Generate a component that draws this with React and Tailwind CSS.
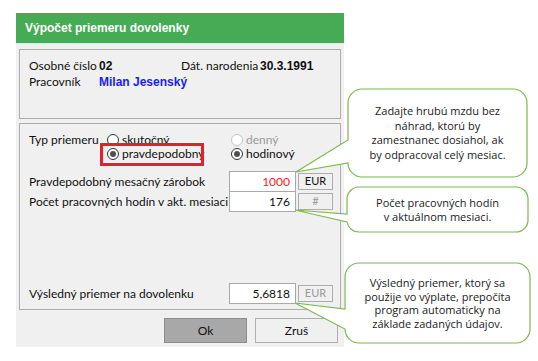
const Radio = ({ checked, disabled, label }) => (
  <div className="flex items-center gap-[3px]">
    <span
      className={`w-[12px] h-[12px] rounded-full border bg-white flex items-center justify-center ${
        disabled ? 'border-[#c4c4c4]' : 'border-[#333333]'
      }`}
    >
      {checked && <span className="w-[6px] h-[6px] rounded-full bg-[#505050]" />}
    </span>
    <span className={disabled ? 'text-[#9a9a9a]' : 'text-[#111]'}>{label}</span>
  </div>
)

const UnitBtn = ({ children, muted }) => (
  <div
    className={`w-[35px] h-[17px] border border-[#adadad] bg-[#f0f0f0] flex items-center justify-center text-[11px] ${
      muted ? 'text-[#9a9a9a]' : 'text-[#111]'
    }`}
  >
    {children}
  </div>
)

const Field = ({ value, red, className = '' }) => (
  <div
    className={`w-[67px] h-[21px] border border-[#a9a9a9] bg-white flex items-center justify-end pr-[5px] ${
      red ? 'text-[#ff1a1a]' : 'text-[#111]'
    } ${className}`}
  >
    {value}
  </div>
)

const App = () => {
  return (
    <div className="relative w-[538px] h-[361px] bg-white overflow-hidden font-['Lato',sans-serif] text-[12px] text-[#111]">
      {/* Dialog */}
      <div className="ml-[16px] pt-[13px] w-[328px]">
        <div className="h-[30px] bg-[#47aa55] flex items-center pl-[9px] text-white font-bold font-['Liberation_Sans',sans-serif] text-[12px]">
          Výpočet priemeru dovolenky
        </div>
        <div className="bg-[#f0f0f0] h-[304px] pt-[6px] px-[3px] flex flex-col">
          {/* Employee info */}
          <div className="h-[70px] border border-[#adadad] pt-[8px] pl-[9px]">
            <div className="flex items-center h-[16px]">
              <span className="w-[70px]">Osobné číslo</span>
              <span className="w-[82px] font-bold font-['Liberation_Sans',sans-serif]">02</span>
              <span className="w-[79px]">Dát. narodenia</span>
              <span className="font-bold font-['Liberation_Sans',sans-serif]">30.3.1991</span>
            </div>
            <div className="flex items-center h-[16px]">
              <span className="w-[70px]">Pracovník</span>
              <span className="font-bold font-['Liberation_Sans',sans-serif] text-[#1a1aff]">Milan Jesenský</span>
            </div>
          </div>

          {/* Calculation */}
          <div className="relative mt-[4px] h-[187px] border border-[#adadad] pt-[9px] pl-[9px]">
            <div className="flex">
              <div className="w-[78px] h-[14px] flex items-center">Typ priemeru</div>
              <div className="w-[124px] flex flex-col">
                <div className="h-[14px] flex items-center">
                  <Radio label="skutočný" />
                </div>
                <div className="h-[14px] flex items-center">
                  <Radio checked label="pravdepodobný" />
                </div>
              </div>
              <div className="flex flex-col">
                <div className="h-[14px] flex items-center">
                  <Radio disabled label="denný" />
                </div>
                <div className="h-[14px] flex items-center">
                  <Radio checked label="hodinový" />
                </div>
              </div>
            </div>
            {/* highlight annotation */}
            <div className="absolute left-[80px] top-[19px] w-[104px] h-[23px] border-[3px] border-[#e5202a]" />

            <div className="mt-[10px] flex items-center">
              <span className="w-[200px]">Pravdepodobný mesačný zárobok</span>
              <Field value="1000" red />
              <div className="ml-[2px]">
                <UnitBtn>EUR</UnitBtn>
              </div>
            </div>
            <div className="-mt-px flex items-center">
              <span className="w-[200px]">Počet pracovných hodín v akt. mesiaci</span>
              <Field value="176" />
              <div className="ml-[2px]">
                <UnitBtn muted>#</UnitBtn>
              </div>
            </div>

            <div className="mt-[71px] flex items-center">
              <span className="w-[200px]">Výsledný priemer na dovolenku</span>
              <Field value="5,6818" />
              <div className="ml-[2px]">
                <UnitBtn muted>EUR</UnitBtn>
              </div>
            </div>
          </div>

          {/* Buttons */}
          <div className="mt-[8px] flex justify-end gap-[8px] pr-[3px]">
            <button className="w-[83px] h-[25px] border border-[#8c8c8c] bg-[#a8a8a8] text-[#111]">Ok</button>
            <button className="w-[83px] h-[25px] border border-[#adadad] bg-[#f0f0f0] text-[#111]">Zruš</button>
          </div>
        </div>
      </div>

      {/* Callouts */}
      <svg className="absolute inset-0 pointer-events-none" width="538" height="361" viewBox="0 0 538 361">
        <path
          d="M362 89 H513 A14 14 0 0 1 527 103 V163 A14 14 0 0 1 513 177 H362 A14 14 0 0 1 348 163 L296 172 L348 140 V103 A14 14 0 0 1 362 89 Z"
          fill="white"
          stroke="#7db84f"
          strokeWidth="1.2"
        />
        <path
          d="M359 187 H516 A12 12 0 0 1 528 199 V220 A12 12 0 0 1 516 232 H359 A12 12 0 0 1 347 222 L295 210 L347 214 V199 A12 12 0 0 1 359 187 Z"
          fill="white"
          stroke="#7db84f"
          strokeWidth="1.2"
        />
        <path
          d="M359 263 H516 A14 14 0 0 1 530 277 V329 A14 14 0 0 1 516 343 H359 A14 14 0 0 1 345 329 L295 303 L345 309 V277 A14 14 0 0 1 359 263 Z"
          fill="white"
          stroke="#7db84f"
          strokeWidth="1.2"
        />
      </svg>
      <div className="absolute left-[348px] top-[89px] w-[179px] h-[88px] flex items-center justify-center text-center font-['Open_Sans',sans-serif] text-[11px] leading-[14.5px] text-[#1a1a1a]">
        Zadajte hrubú mzdu bez
        <br />
        náhrad, ktorú by
        <br />
        zamestnanec dosiahol, ak
        <br />
        by odpracoval celý mesiac.
      </div>
      <div className="absolute left-[347px] top-[187px] w-[181px] h-[45px] flex items-center justify-center text-center font-['Open_Sans',sans-serif] text-[11px] leading-[14px] text-[#1a1a1a]">
        Počet pracovných hodín
        <br />v aktuálnom mesiaci.
      </div>
      <div className="absolute left-[345px] top-[263px] w-[185px] h-[80px] flex items-center justify-center text-center font-['Open_Sans',sans-serif] text-[11px] leading-[13.5px] text-[#1a1a1a]">
        Výsledný priemer, ktorý sa
        <br />
        použije vo výplate, prepočíta
        <br />
        program automaticky na
        <br />
        základe zadaných údajov.
      </div>
    </div>
  )
}

export default App
